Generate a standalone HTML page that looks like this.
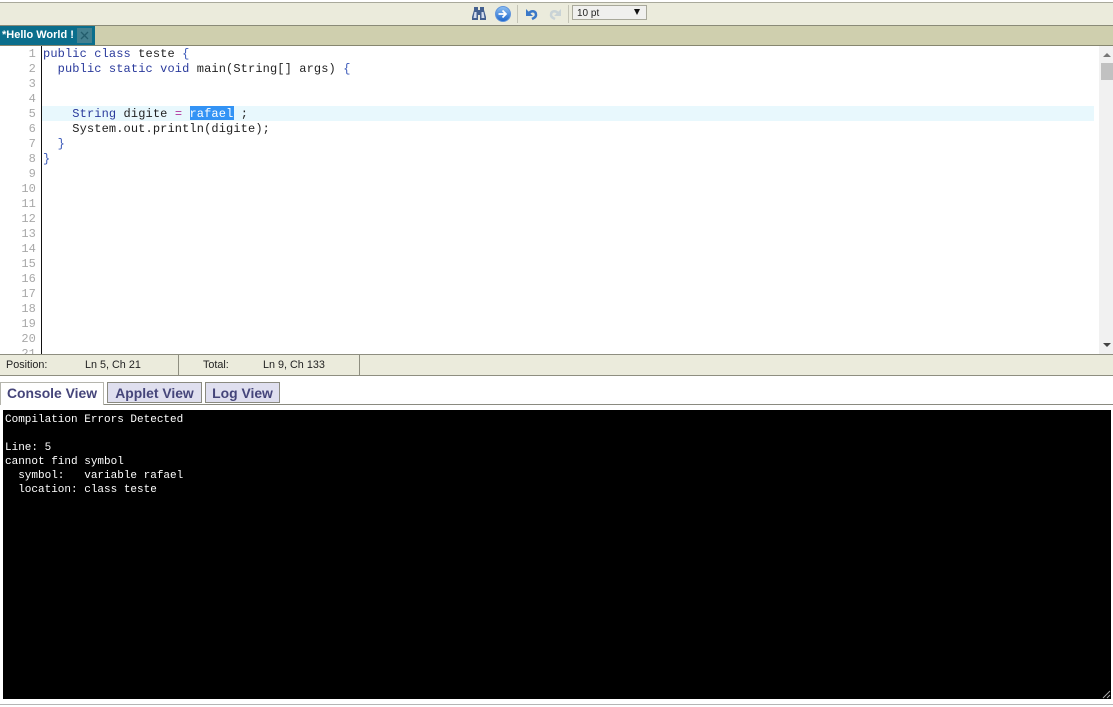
<!DOCTYPE html>
<html>
<head>
<meta charset="utf-8">
<style>
html,body{margin:0;padding:0;width:1113px;height:707px;overflow:hidden;background:#fff;font-family:"Liberation Sans",sans-serif}
.a{position:absolute}
.code{position:absolute;left:43px;white-space:pre;font:12px/15px "Liberation Mono",monospace;letter-spacing:.12px;color:#222;height:15px}
.k{color:#2a3a9c}
.b{color:#3a58b8}
.n{position:absolute;left:0;width:36px;text-align:right;font:12px/15px "Liberation Mono",monospace;letter-spacing:.12px;color:#a8a8a8}
.tab{position:absolute;top:382px;height:21px;box-sizing:border-box;border:1px solid #8a8a80;background:#dfdfef;color:#45457a;font:bold 13.900px/21px "Liberation Sans",sans-serif;text-align:center}
.st{position:absolute;top:359px;font:10.800px/13px "Liberation Sans",sans-serif;color:#222}
.c{position:absolute;left:5px;white-space:pre;font:11px/14px "Liberation Mono",monospace;color:#fff}
</style>
</head>
<body>
<!-- top toolbar -->
<div class="a" style="left:0;top:2px;width:1113px;height:23px;background:#ebebdc;border-top:1px solid #a9a99b;box-sizing:border-box"></div>
<svg class="a" style="left:465px;top:2px" width="110" height="22" viewBox="0 0 110 22">
  <defs>
    <linearGradient id="g" x1="0" y1="0" x2="0" y2="1"><stop offset="0" stop-color="#8fc0f2"/><stop offset="1" stop-color="#1c66cc"/></linearGradient>
  </defs>
  <path d="M9 5h4v3h2V5h4v3l2 7v3h-6v-5h-2v5H7v-3l2-7z" fill="#44608f"/>
  <path d="M9.500 10l-1 6h3v-6zM16.500 10v6h3l-1-6z" fill="#d3dcee"/>
  <circle cx="38" cy="12" r="7.500" fill="url(#g)" stroke="#5f94dc" stroke-width="1"/>
  <path d="M33.500 12h7M37.500 8.500l3.500 3.500-3.500 3.500" fill="none" stroke="#fff" stroke-width="1.700"/>
  <rect x="52" y="3" width="1" height="18" fill="#c4c4b6"/>
  <path d="M61 7v7h7z" fill="#3a78c8"/>
  <path d="M64 11c3-3 7-2 7 2 0 2-2 3-4 4" fill="none" stroke="#3a78c8" stroke-width="2.500"/>
  <path d="M96 7v7h-7z" fill="#c9d3d6"/>
  <path d="M93 11c-3-3-7-2-7 2 0 2 2 3 4 4" fill="none" stroke="#c9d3d6" stroke-width="2.500"/>
  <rect x="103" y="3" width="1" height="18" fill="#c4c4b6"/>
</svg>
<div class="a" style="left:572px;top:5px;width:75px;height:15px;box-sizing:border-box;border:1px solid #a8a89a;background:#f0f0ee;font:10px/15px 'Liberation Sans',sans-serif;color:#222;padding-left:4px">10 pt</div>
<div class="a" style="left:634px;top:9px;width:0;height:0;border-left:3.500px solid transparent;border-right:3.500px solid transparent;border-top:6px solid #111"></div>

<!-- tab bar -->
<div class="a" style="left:0;top:25px;width:1113px;height:21px;box-sizing:border-box;background:#cfcfae;border-top:1px solid #8a8a78;border-bottom:1px solid #86866f"></div>
<div class="a" style="left:0;top:26px;width:95px;height:19px;background:#0b6e8c"></div>
<div class="a" style="left:2px;top:28px;font:bold 11px/14px 'Liberation Sans',sans-serif;color:#fff;white-space:pre">*Hello World !</div>
<svg class="a" style="left:77px;top:28px" width="15" height="15" viewBox="0 0 15 15">
  <rect width="15" height="15" fill="#44808f"/>
  <path d="M4 4l7 7M11 4l-7 7" stroke="#235c6c" stroke-width="1.300"/>
</svg>

<!-- editor -->
<div class="a" style="left:41px;top:46px;width:1px;height:308px;background:#111"></div>
<div class="a" style="left:42px;top:106px;width:1052px;height:15px;background:#e8f8fd"></div>
<div class="a" style="left:190px;top:106px;width:44px;height:14px;background:#3393f5"></div>
<div class="a" style="left:0;top:46px;width:41px;height:308px;overflow:hidden">
<div class="n" style="top:1px">1</div><div class="n" style="top:16px">2</div><div class="n" style="top:31px">3</div><div class="n" style="top:46px">4</div><div class="n" style="top:61px">5</div><div class="n" style="top:76px">6</div><div class="n" style="top:91px">7</div><div class="n" style="top:106px">8</div><div class="n" style="top:121px">9</div><div class="n" style="top:136px">10</div><div class="n" style="top:151px">11</div><div class="n" style="top:166px">12</div><div class="n" style="top:181px">13</div><div class="n" style="top:196px">14</div><div class="n" style="top:211px">15</div><div class="n" style="top:226px">16</div><div class="n" style="top:241px">17</div><div class="n" style="top:256px">18</div><div class="n" style="top:271px">19</div><div class="n" style="top:286px">20</div><div class="n" style="top:301px">21</div>
</div>
<div class="code" style="top:47px"><span class="k">public class</span> teste <span class="b">{</span></div>
<div class="code" style="top:62px">  <span class="k">public static void</span> main(String[] args) <span class="b">{</span></div>
<div class="code" style="top:107px">    <span class="k">String</span> digite <span style="color:#b0309a">=</span> <span style="color:#fff">rafael</span> ;</div>
<div class="code" style="top:122px">    System.out.println(digite);</div>
<div class="code" style="top:137px">  <span class="b">}</span></div>
<div class="code" style="top:152px"><span class="b">}</span></div>

<!-- scrollbar -->
<div class="a" style="left:1099px;top:46px;width:14px;height:308px;background:#f1f1f1"></div>
<div class="a" style="left:1103px;top:53px;width:0;height:0;border-left:4px solid transparent;border-right:4px solid transparent;border-bottom:4px solid #777"></div>
<div class="a" style="left:1101px;top:63px;width:12px;height:17px;background:#c1c1c1"></div>
<div class="a" style="left:1103px;top:343px;width:0;height:0;border-left:4px solid transparent;border-right:4px solid transparent;border-top:4px solid #444"></div>

<!-- status bar -->
<div class="a" style="left:0;top:354px;width:1113px;height:22px;box-sizing:border-box;background:#ebebdc;border-top:1px solid #8e8e80;border-bottom:1px solid #8e8e80"></div>
<div class="a" style="left:178px;top:355px;width:1px;height:20px;background:#8e8e80"></div>
<div class="a" style="left:359px;top:355px;width:1px;height:20px;background:#8e8e80"></div>
<div class="st" style="left:6px">Position:</div>
<div class="st" style="left:85px">Ln 5, Ch 21</div>
<div class="st" style="left:203px">Total:</div>
<div class="st" style="left:263px">Ln 9, Ch 133</div>

<!-- view tabs -->
<div class="a" style="left:0;top:404px;width:1113px;height:1px;background:#8a8a80"></div>
<div class="tab" style="left:0;width:104px;height:23px;background:#fff;border-bottom:none;border-color:#b5b5ad">Console View</div>
<div class="tab" style="left:107px;width:95px">Applet View</div>
<div class="tab" style="left:205px;width:75px">Log View</div>

<!-- console -->
<div class="a" style="left:3px;top:410px;width:1108px;height:289px;background:#000"></div>
<div class="c" style="top:413px">Compilation Errors Detected</div>
<div class="c" style="top:441px">Line: 5</div>
<div class="c" style="top:455px">cannot find symbol</div>
<div class="c" style="top:469px">  symbol:   variable rafael</div>
<div class="c" style="top:483px">  location: class teste</div>
<svg class="a" style="left:1101px;top:689px" width="10" height="10" viewBox="0 0 10 10">
  <path d="M2 9L9 2M6 9l3-3" stroke="#aaa" stroke-width="1" fill="none"/>
</svg>
<div class="a" style="left:0;top:704px;width:1113px;height:1px;background:#b5b5b5"></div>
</body>
</html>
